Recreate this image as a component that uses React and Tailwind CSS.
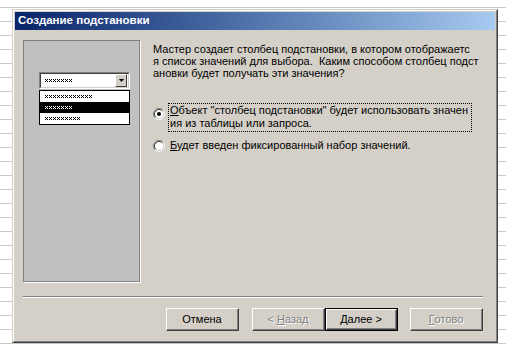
import React from "react";

// small "xxxx" hatch glyphs used in the wizard picture
const Hatch = ({ n, color = "#000" }) => {
  const w = n * 4 - 1;
  const dots = [];
  for (let i = 0; i < n; i++) {
    const x = i * 4;
    dots.push([x, 0], [x + 2, 0], [x + 1, 1], [x, 2], [x + 2, 2]);
  }
  return (
    <svg width={w} height={3} className="block">
      {dots.map(([x, y], k) => (
        <rect key={k} x={x} y={y} width={1} height={1} fill={color} />
      ))}
    </svg>
  );
};

const Radio = ({ checked }) => (
  <svg width={12} height={12} className="block shrink-0">
    <circle cx={6} cy={6} r={4.5} fill="#fff" />
    <path d="M2.11 9.89 A5.5 5.5 0 0 1 9.89 2.11" stroke="#808080" fill="none" />
    <path d="M9.89 2.11 A5.5 5.5 0 0 1 2.11 9.89" stroke="#fff" fill="none" />
    <path d="M2.82 9.18 A4.5 4.5 0 0 1 9.18 2.82" stroke="#404040" fill="none" />
    <path d="M9.18 2.82 A4.5 4.5 0 0 1 2.82 9.18" stroke="#d4d0c8" fill="none" />
    {checked && <circle cx={6} cy={6} r={2} fill="#000" />}
  </svg>
);

const Btn = ({ children, disabled, def }) => (
  <div className={`w-[73px] h-[23px] ${def ? "border border-black" : ""}`}>
    <div className="h-full border border-t-white border-l-white border-r-[#404040] border-b-[#404040]">
      <div
        className={`h-full flex items-center justify-center border-r border-b border-r-[#808080] border-b-[#808080] ${
          disabled ? "text-[#808080] [text-shadow:1px_1px_0_#fff]" : "text-black"
        }`}
      >
        {children}
      </div>
    </div>
  </div>
);

export default function App() {
  return (
    <div className="w-[506px] h-[351px] overflow-hidden bg-white bg-[repeating-linear-gradient(180deg,#fff_0px,#fff_7px,#c8c8c8_7px,#c8c8c8_8px,#fff_8px,#fff_14px)] pl-[12px] pt-[9px] font-['Liberation_Sans',Arial,sans-serif] text-[11px] text-black">
      {/* window frame */}
      <div className="w-[486px] h-[334px] border border-t-[#d4d0c8] border-l-[#d4d0c8] border-r-[#404040] border-b-[#404040] bg-[#d4d0c8]">
        <div className="h-full border border-t-white border-l-white border-r-[#808080] border-b-[#808080] p-px flex flex-col">
          {/* title bar */}
          <div className="h-[18px] bg-linear-to-r from-[#0a246a] to-[#a6caf0] flex items-center pl-[3px] text-white font-bold text-[11.5px]">
            Создание подстановки
          </div>

          <div className="flex-1 pl-[8px] pt-[10px] flex flex-col">
            <div className="flex">
              {/* picture panel */}
              <div className="w-[117px] h-[242px] border border-[#808080] shadow-[1px_1px_0_#fff] bg-[#c0c0c0] pl-[15px] pt-[31px]">
                <div className="w-[91px] h-[17px] border border-t-[#808080] border-l-[#808080] border-r-white border-b-white">
                  <div className="h-full bg-white border border-t-[#404040] border-l-[#404040] border-r-[#d4d0c8] border-b-[#d4d0c8] flex items-center pl-[4px] pr-px">
                    <div className="flex-1">
                      <Hatch n={7} />
                    </div>
                    <div className="w-[12px] h-[13px] bg-[#d4d0c8] border border-t-white border-l-white border-r-[#404040] border-b-[#404040] flex items-center justify-center">
                      <svg width={5} height={3} className="block">
                        <path d="M0 0h5L2.5 3z" fill="#000" />
                      </svg>
                    </div>
                  </div>
                </div>
                <div className="mt-[1px] w-[91px] border border-black bg-white">
                  <div className="h-[11px] flex items-center pl-[5px]">
                    <Hatch n={12} />
                  </div>
                  <div className="h-[11px] flex items-center pl-[5px] bg-black">
                    <Hatch n={7} color="#fff" />
                  </div>
                  <div className="h-[11px] flex items-center pl-[5px]">
                    <Hatch n={9} />
                  </div>
                </div>
              </div>

              {/* text column */}
              <div className="ml-[13px] pt-[3px] whitespace-nowrap">
                <div className="leading-[12px]">
                  <div>Мастер создает столбец подстановки, в котором отображаетс</div>
                  <div>я список значений для выбора.&nbsp; Каким способом столбец подст</div>
                  <div>ановки будет получать эти значения?</div>
                </div>

                <div className="mt-[24px] flex items-start">
                  <div className="mt-[5px]">
                    <Radio checked />
                  </div>
                  <div className="ml-[3px] border border-dotted border-black pl-px pr-[3px] pb-[1px] leading-[13px]">
                    <div>
                      <span className="underline">О</span>бъект "столбец подстановки" будет использовать значен
                    </div>
                    <div>ия из таблицы или запроса.</div>
                  </div>
                </div>

                <div className="mt-[7px] flex items-center">
                  <Radio />
                  <div className="ml-[4px] pl-px leading-[13px]">
                    <span className="underline">Б</span>удет введен фиксированный набор значений.
                  </div>
                </div>
              </div>
            </div>

            {/* separator */}
            <div className="mt-[14px] w-[460px] h-[2px] border-t border-t-[#808080] border-b border-b-white" />

            {/* buttons */}
            <div className="mt-[10px] w-[460px] flex justify-end">
              <Btn>Отмена</Btn>
              <div className="ml-[13px]">
                <Btn disabled>
                  &lt; <span className="underline ml-[3px]">Н</span>азад
                </Btn>
              </div>
              <Btn def>
                <span className="underline">Д</span>алее &gt;
              </Btn>
              <div className="ml-[12px]">
                <Btn disabled>
                  <span className="underline">Г</span>отово
                </Btn>
              </div>
            </div>
          </div>
        </div>
      </div>
    </div>
  );
}
